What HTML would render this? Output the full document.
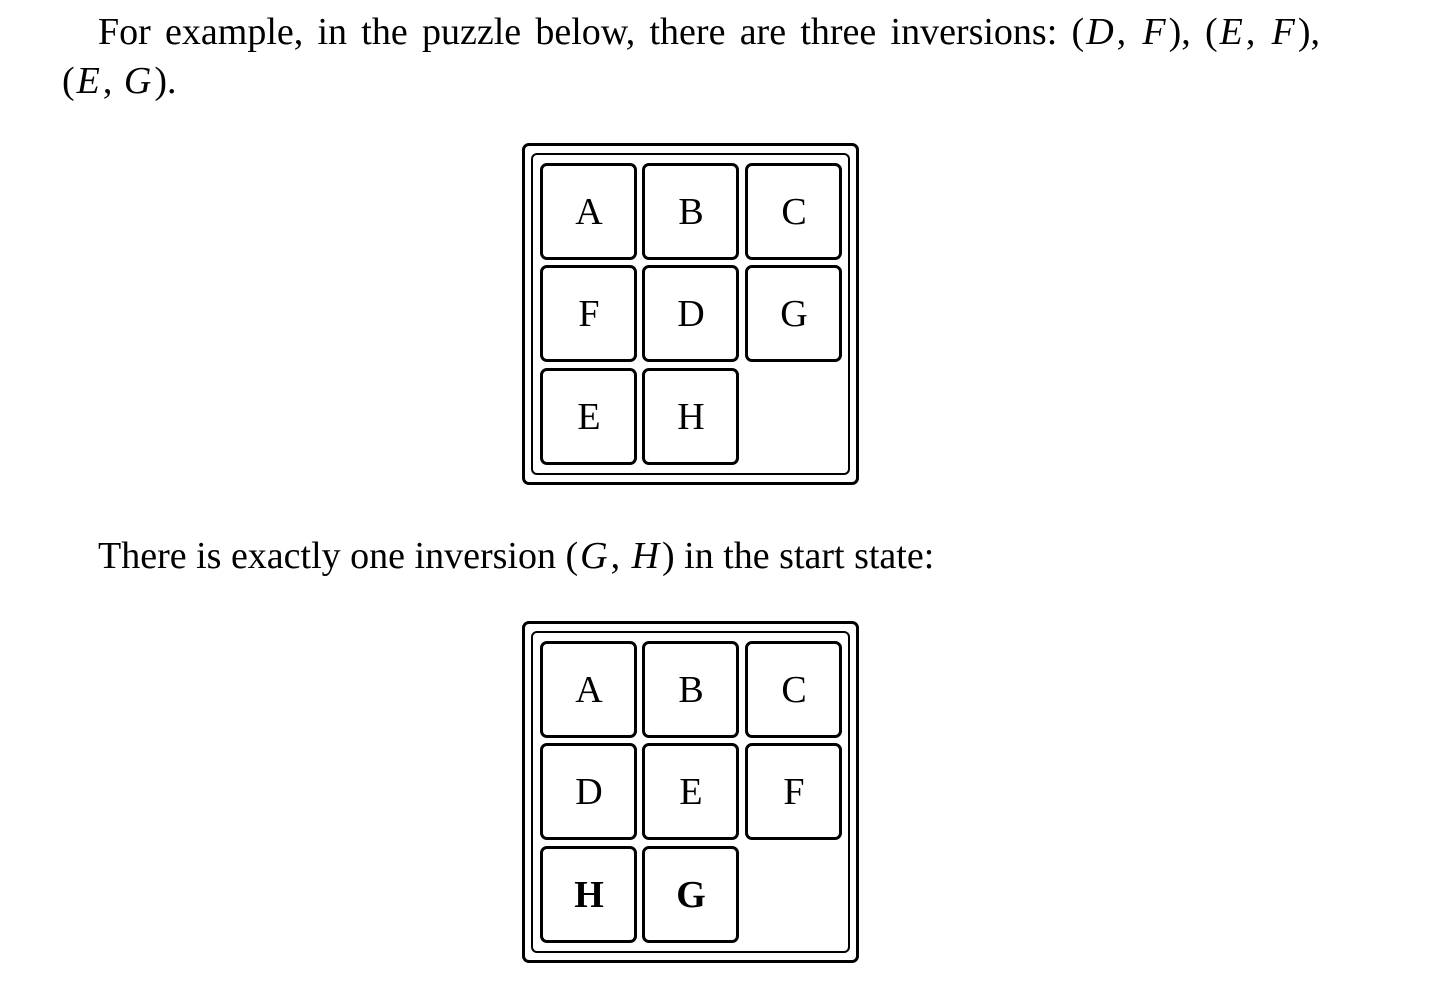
<!DOCTYPE html>
<html><head><meta charset="utf-8"><style>
body{margin:0;background:#fff;width:1449px;height:989px;position:relative;overflow:hidden;font-family:"Liberation Serif",serif;color:#000}
.t{position:absolute;font-size:38px;white-space:nowrap;line-height:1}
.j{text-align:justify;text-align-last:justify;white-space:normal;width:1222px}
i{font-style:italic;padding:0 3px 0 2px}
.ob{position:absolute;left:522px;width:331px;border:3px solid #000;border-radius:7px;height:336px}
.tile{position:absolute;width:97px;height:97px;box-sizing:border-box;border:3px solid #000;border-radius:7px;font-size:38px;display:flex;align-items:center;justify-content:center;padding-left:1px}
b{font-weight:bold}
</style></head><body>
<div class="t j" style="left:98px;top:13px">For example, in the puzzle below, there are three inversions: (<i>D</i>, <i>F</i>), (<i>E</i>, <i>F</i>),</div>
<div class="t" style="left:62px;top:62px">(<i>E</i>, <i>G</i>).</div>
<div class="t" style="left:98px;top:537px">There is exactly one inversion (<i>G</i>, <i>H</i>) in the start state:</div>

<div class="ob" style="top:143px"></div>
<div style="position:absolute;left:531px;top:153px;width:319px;height:322px;border:2px solid #000;border-radius:6px;box-sizing:border-box"></div>
<div class="tile" style="left:540px;top:163px">A</div>
<div class="tile" style="left:642px;top:163px">B</div>
<div class="tile" style="left:745px;top:163px">C</div>
<div class="tile" style="left:540px;top:265px">F</div>
<div class="tile" style="left:642px;top:265px">D</div>
<div class="tile" style="left:745px;top:265px">G</div>
<div class="tile" style="left:540px;top:368px">E</div>
<div class="tile" style="left:642px;top:368px">H</div>

<div class="ob" style="top:621px"></div>
<div style="position:absolute;left:531px;top:631px;width:319px;height:322px;border:2px solid #000;border-radius:6px;box-sizing:border-box"></div>
<div class="tile" style="left:540px;top:641px">A</div>
<div class="tile" style="left:642px;top:641px">B</div>
<div class="tile" style="left:745px;top:641px">C</div>
<div class="tile" style="left:540px;top:743px">D</div>
<div class="tile" style="left:642px;top:743px">E</div>
<div class="tile" style="left:745px;top:743px">F</div>
<div class="tile" style="left:540px;top:846px"><b>H</b></div>
<div class="tile" style="left:642px;top:846px"><b>G</b></div>
</body></html>
